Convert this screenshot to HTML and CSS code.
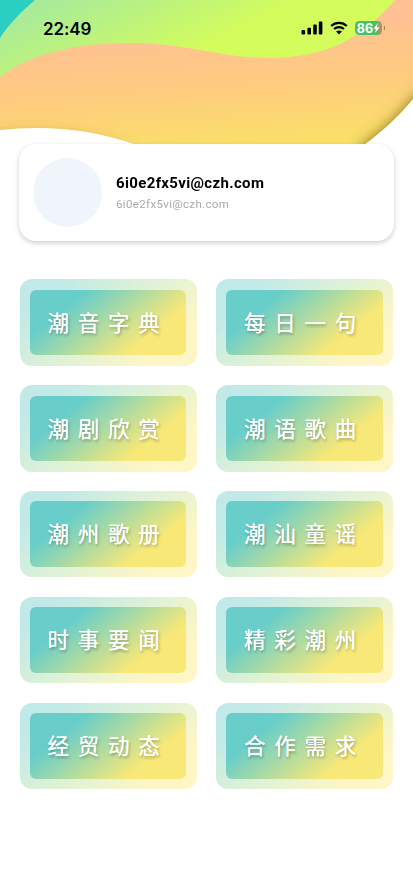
FILE: index.html
```
<!DOCTYPE html>
<html lang="zh-CN">
<head>
<meta charset="utf-8">
<meta name="viewport" content="width=device-width, initial-scale=1">
<title>潮州</title>
<link rel="stylesheet" href="styles.css">
</head>
<body>
<div class="header">
	<svg class="waves" width="413" height="145" viewBox="0 0 413 145">
		<defs>
			<linearGradient id="orange" x1="0.35" y1="0" x2="0.55" y2="1">
				<stop offset="0.2" stop-color="#ffc094"/>
				<stop offset="0.6" stop-color="#fecb80"/>
				<stop offset="1" stop-color="#fadf69"/>
			</linearGradient>
			<linearGradient id="green" gradientUnits="userSpaceOnUse" x1="120" y1="-30" x2="165" y2="65">
				<stop offset="0" stop-color="#a9eb99"/>
				<stop offset="1" stop-color="#d3fc5c"/>
			</linearGradient>
			<filter id="soft" x="-20%" y="-50%" width="140%" height="200%">
				<feGaussianBlur stdDeviation="7"/>
			</filter>
		</defs>
		<rect width="413" height="145" fill="url(#orange)"/>
		<path d="M0 77C30 54 75 43 130 43C186 43 222 58 268 58C326 58 360 40 395 0H0Z" fill="url(#green)"/>
		<path d="M0 0H35C21 12 9 24 0 38Z" fill="#2acfc1"/>
		<g fill="#6b5610" filter="url(#soft)">
			<path d="M-20 138C40 129 90 135 135 152H-20Z" opacity="0.45"/>
			<path d="M440 74L413 99C399 116 383 131 363 145L358 160H440Z" opacity="0.75"/>
		</g>
		<path d="M0 130C45 125 92 129 137 145H0Z" fill="#fff"/>
		<path d="M413 99C399 116 383 131 364 145H413Z" fill="#fff"/>
	</svg>
	<div class="status">
		<span class="time">22:49</span>
		<div class="icons">
			<svg class="signal" width="22" height="14" viewBox="0 0 22 14">
				<rect x="0.5" y="9" width="3.6" height="4.5" rx="1"/>
				<rect x="6.4" y="6.7" width="3.6" height="6.8" rx="1"/>
				<rect x="12.2" y="3.6" width="3.6" height="9.9" rx="1"/>
				<rect x="17.8" y="0.6" width="3.6" height="12.9" rx="1"/>
			</svg>
			<svg class="wifi" width="18" height="14" viewBox="0 0 18 14">
				<path d="M1.2 5C5.6 0.8 12.4 0.8 16.8 5M4.1 8C6.9 5.4 11.1 5.4 13.9 8" fill="none" stroke="#000" stroke-width="2.3"/>
				<path d="M9 13.5L6.1 10.6C7.8 9.2 10.2 9.2 11.9 10.6Z"/>
			</svg>
			<div class="battery">
				<span>86</span>
				<svg width="7" height="10" viewBox="0 0 6 10"><path d="M4.3 0L0 5.8H2.4L1.6 10L6 4.2H3.5Z" fill="#fff"/></svg>
			</div>
		</div>
	</div>
</div>

<div class="card">
	<div class="avatar"></div>
	<div class="user">
		<div class="name">6i0e2fx5vi@czh.com</div>
		<div class="mail">6i0e2fx5vi@czh.com</div>
	</div>
</div>

<div class="menu">
	<div class="item"><div class="label">潮音字典</div></div>
	<div class="item"><div class="label">每日一句</div></div>
	<div class="item"><div class="label">潮剧欣赏</div></div>
	<div class="item"><div class="label">潮语歌曲</div></div>
	<div class="item"><div class="label">潮州歌册</div></div>
	<div class="item"><div class="label">潮汕童谣</div></div>
	<div class="item"><div class="label">时事要闻</div></div>
	<div class="item"><div class="label">精彩潮州</div></div>
	<div class="item"><div class="label">经贸动态</div></div>
	<div class="item"><div class="label">合作需求</div></div>
</div>
</body>
</html>
```
FILE: styles.css
```
* {
	box-sizing: border-box;
}
body {
	margin: 0;
	min-height: 896px;
	background: #fff;
	font-family: Inter, "Noto Sans CJK SC", sans-serif;
}
.header {
	display: grid;
	height: 144px;
}
.waves, .status {
	grid-area: 1 / 1;
}
.waves {
	display: block;
}
.status {
	z-index: 1;
	display: flex;
	justify-content: space-between;
	align-items: center;
	height: 28px;
	margin-top: 14px;
	padding: 0 29px 0 43px;
}
.time {
	padding-top: 1px;
	font-size: 17px;
	font-weight: 600;
	letter-spacing: -0.1px;
}
.icons {
	display: flex;
	align-items: center;
}
.wifi {
	margin: 0 7px 0 7px;
}
.battery {
	position: relative;
	display: flex;
	align-items: center;
	justify-content: center;
	width: 27px;
	height: 14px;
	margin-right: 2px;
	border-radius: 4.5px;
	background: linear-gradient(90deg, #45c167 86%, #a39a62 86%);
	color: #fff;
	font-size: 12.5px;
	font-weight: 700;
}
.battery::after {
	content: "";
	position: absolute;
	right: -3px;
	top: 5px;
	width: 1px;
	height: 4px;
	background: #a08a50;
}
.card {
	position: relative;
	display: flex;
	align-items: center;
	height: 97px;
	margin: 0 19px;
	padding: 0 14px;
	border-radius: 17px;
	background: #fff;
	box-shadow: 0 2px 5px rgba(0, 0, 0, 0.2);
}
.avatar {
	width: 69px;
	height: 69px;
	margin-right: 14px;
	border-radius: 50%;
	background: #f0f4fb;
}
.user {
	padding-top: 2px;
	font-family: Roboto, sans-serif;
}
.name {
	color: #000;
	font-size: 15px;
	font-weight: 700;
	line-height: 20px;
	letter-spacing: 0.35px;
}
.mail {
	margin-top: 1px;
	color: #aaa;
	font-size: 11.5px;
	line-height: 20px;
	letter-spacing: 0.35px;
}
.menu {
	display: grid;
	grid-template-columns: 177px 177px;
	column-gap: 19.5px;
	row-gap: 19.3px;
	padding: 38.4px 0 0 19.7px;
}
.item {
	height: 86.5px;
	padding: 10.5px;
	padding-left: 10px;
	border-radius: 12px;
	background: linear-gradient(140deg, #c0e9e8 15%, #e0f2d6 50%, #fef6c6 82%);
}
.label {
	height: 65.5px;
	border-radius: 6px;
	background: linear-gradient(141deg, #69cec9 25%, #f7e878 74%);
	color: #fff;
	font-family: "Noto Sans CJK SC", sans-serif;
	font-size: 21.5px;
	font-weight: 400;
	line-height: 63px;
	letter-spacing: 8.7px;
	text-align: center;
	text-shadow: 0 0 0.5px #fff, 1px 2px 3px rgba(0, 0, 0, 0.3);
}
```
